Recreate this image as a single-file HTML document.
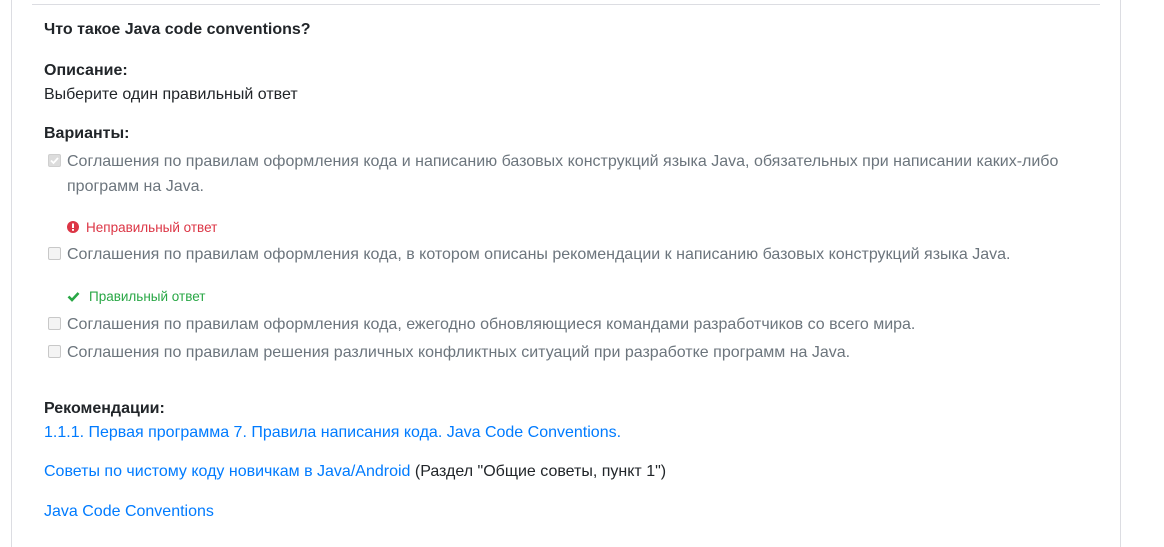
<!DOCTYPE html>
<html><head><meta charset="utf-8"><style>
body{margin:0;width:1164px;height:547px;background:#fff;font-family:"Liberation Sans",sans-serif;font-size:16px;color:#212529;position:relative;overflow:hidden}
.vl{position:absolute;top:0;bottom:0;width:1px;background:#dcdde2}
.hl{position:absolute;left:32px;width:1068px;top:4px;height:1px;background:#dcdde2}
.t{position:absolute;left:44px;white-space:nowrap;line-height:20px;margin-top:2px}
b{font-weight:bold}
.opt{position:absolute;left:48px;color:#6c757d;white-space:nowrap;line-height:25px;margin-top:1px}
.cb{display:inline-block;width:13px;height:13px;border:1px solid #c8c8c8;border-radius:2px;background:#f4f4f4;vertical-align:-1px;margin-right:6px;box-sizing:border-box;position:relative}
a{color:#007bff;text-decoration:none}
.fb{position:absolute;left:67px;font-size:13.5px;white-space:nowrap;line-height:16px;margin-top:1px}
</style></head><body>
<div class="vl" style="left:11px"></div><div class="vl" style="left:1120px"></div>
<div class="hl"></div>
<div class="t" style="top:18px"><b>Что такое Java code conventions?</b></div>
<div class="t" style="top:59px"><b>Описание:</b></div>
<div class="t" style="top:83px">Выберите один правильный ответ</div>
<div class="t" style="top:122px"><b>Варианты:</b></div>
<div class="opt" style="top:148px"><span class="cb" style="background:#dcdcdc;border-color:#cfcfcf"><svg width="11" height="11" viewBox="0 0 11 11" style="position:absolute;left:0;top:0"><path d="M2 5.5l2.5 2.5 4.5-5" stroke="#fff" stroke-width="1.8" fill="none"/></svg></span>Соглашения по правилам оформления кода и написанию базовых конструкций языка Java, обязательных при написании каких-либо</div>
<div class="opt" style="top:173px;left:67px">программ на Java.</div>
<div class="fb" style="top:219px;color:#dc3545"><svg width="12" height="12" viewBox="0 0 12 12" style="vertical-align:-1px;margin-right:7px"><circle cx="6" cy="6" r="6" fill="#dc3545"/><rect x="5" y="2.5" width="2" height="4.5" fill="#fff"/><rect x="5" y="8" width="2" height="1.8" fill="#fff"/></svg>Неправильный ответ</div>
<div class="opt" style="top:241px"><span class="cb"></span>Соглашения по правилам оформления кода, в котором описаны рекомендации к написанию базовых конструкций языка Java.</div>
<div class="fb" style="top:288px;color:#28a745"><svg width="13" height="11" viewBox="0 0 13 11" style="vertical-align:-1px;margin-right:9px"><path d="M1.5 5.5l3.5 3.5 6.5-7" stroke="#28a745" stroke-width="2.6" fill="none"/></svg>Правильный ответ</div>
<div class="opt" style="top:311px"><span class="cb"></span>Соглашения по правилам оформления кода, ежегодно обновляющиеся командами разработчиков со всего мира.</div>
<div class="opt" style="top:339px"><span class="cb"></span>Соглашения по правилам решения различных конфликтных ситуаций при разработке программ на Java.</div>
<div class="t" style="top:397px"><b>Рекомендации:</b></div>
<div class="t" style="top:421px"><a>1.1.1. Первая программа 7. Правила написания кода. Java Code Conventions.</a></div>
<div class="t" style="top:460px"><a>Советы по чистому коду новичкам в Java/Android</a> (Раздел "Общие советы, пункт 1")</div>
<div class="t" style="top:500px"><a>Java Code Conventions</a></div>
</body></html>
